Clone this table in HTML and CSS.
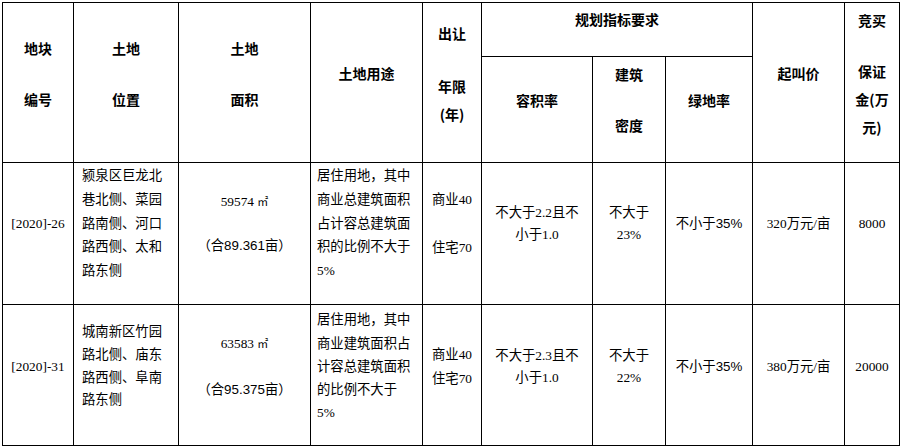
FILE: index.html
```html
<!DOCTYPE html>
<html lang="zh-CN">
<head>
<meta charset="utf-8">
<title>地块出让表</title>
<link rel="stylesheet" href="styles.css">
</head>
<body>
<div class="sheet">
  <div class="cell hd tall"><p>地块</p><p class="pgap">编号</p></div>
  <div class="cell hd tall"><p>土地</p><p class="pgap">位置</p></div>
  <div class="cell hd tall"><p>土地</p><p class="pgap">面积</p></div>
  <div class="cell hd tall"><p>土地用途</p></div>
  <div class="cell hd tall"><p>出让</p><p class="pgap2">年限<br>(年)</p></div>
  <div class="cell hd group"><p>规划指标要求</p></div>
  <div class="cell hd tall"><p>起叫价</p></div>
  <div class="cell hd tall"><p>竞买</p><p class="pgap">保证<br>金(万<br>元)</p></div>
  <div class="cell hd sub"><p>容积率</p></div>
  <div class="cell hd sub"><p>建筑</p><p class="pgap">密度</p></div>
  <div class="cell hd sub"><p>绿地率</p></div>

  <div class="cell bd r1"><p>[2020]-26</p></div>
  <div class="cell bd r1 left loc"><p>颍泉区巨龙北巷北侧、菜园路南侧、河口路西侧、太和路东侧</p></div>
  <div class="cell bd r1 area"><p>59574 <span class="unit">㎡</span></p><p class="agap1">（合<span class="sans">89.361</span>亩）</p></div>
  <div class="cell bd r1 left use"><p>居住用地，其中商业总建筑面积占计容总建筑面积的比例不大于5%</p></div>
  <div class="cell bd r1 term"><p>商业40</p><p class="tgap">住宅70</p></div>
  <div class="cell bd r1 far"><p>不大于2.2且不小于1.0</p></div>
  <div class="cell bd r1 dens"><p>不大于23%</p></div>
  <div class="cell bd r1"><p>不小于<span class="sans">35%</span></p></div>
  <div class="cell bd r1"><p>320万元/亩</p></div>
  <div class="cell bd r1"><p>8000</p></div>

  <div class="cell bd r2"><p>[2020]-31</p></div>
  <div class="cell bd r2 left loc"><p>城南新区竹园路北侧、庙东路西侧、阜南路东侧</p></div>
  <div class="cell bd r2 area"><p>63583 <span class="unit">㎡</span></p><p class="agap2">（合<span class="sans">95.375</span>亩）</p></div>
  <div class="cell bd r2 left use"><p>居住用地，其中商业建筑面积占计容总建筑面积的比例不大于5%</p></div>
  <div class="cell bd r2 term"><p>商业40</p><p>住宅70</p></div>
  <div class="cell bd r2 far"><p>不大于2.3且不小于1.0</p></div>
  <div class="cell bd r2 dens"><p>不大于22%</p></div>
  <div class="cell bd r2"><p>不小于<span class="sans">35%</span></p></div>
  <div class="cell bd r2"><p>380万元/亩</p></div>
  <div class="cell bd r2"><p>20000</p></div>
</div>
</body>
</html>
```

FILE: styles.css
```css
html, body {
  margin: 0;
  padding: 0;
  background: #fff;
}
body {
  padding: 2px;
  font-family: "Liberation Serif", "Noto Sans CJK SC", serif;
  color: #000;
  text-spacing-trim: space-all;
}
.sheet {
  display: grid;
  width: max-content;
  grid-template-columns: 71px 105px 132px 112px 59px 111px 73px 87px 92px 55px;
  grid-template-rows: 54px 106px 142px 141px;
  border-left: 1px solid #000;
  border-top: 1px solid #000;
}
.cell {
  box-sizing: border-box;
  border-right: 1px solid #000;
  border-bottom: 1px solid #000;
  display: flex;
  flex-direction: column;
  justify-content: center;
  align-items: center;
  text-align: center;
  min-width: 0;
}
.cell p {
  margin: 0;
}
.hd {
  font-family: "Noto Sans CJK SC", sans-serif;
  font-weight: 700;
  font-size: 14px;
  line-height: 28px;
}
.tall {
  grid-row: span 2;
  padding-bottom: 19px;
}
.group {
  grid-column: span 3;
  padding-bottom: 22px;
}
.sub {
  padding-bottom: 20px;
}
.pgap {
  margin-top: 23px !important;
}
.pgap2 {
  margin-top: 25px !important;
}
.bd {
  font-size: 13.33px;
  line-height: 23.7px;
}
.r1 {
  padding-bottom: 20px;
}
.r2 {
  padding-bottom: 17px;
}
.left {
  align-items: stretch;
  text-align: left;
}
.loc {
  padding-left: 8px;
  padding-right: 8px;
}
.r2.loc {
  line-height: 22.7px;
}
.use {
  padding-left: 6px;
  padding-right: 11px;
}
.r2.use {
  line-height: 23.2px;
}
.area {
  line-height: 22px;
}
.agap1 {
  margin-top: 22px !important;
}
.agap2 {
  margin-top: 24px !important;
}
.term {
  line-height: 24px;
}
.tgap {
  margin-top: 24px !important;
}
.far {
  padding-left: 8px;
  padding-right: 8px;
  line-height: 22px;
}
.dens {
  padding-left: 8px;
  padding-right: 8px;
  line-height: 22px;
}
.sans {
  font-family: "Liberation Sans", "Noto Sans CJK SC", sans-serif;
}
.unit {
  font-family: "Noto Sans CJK SC", sans-serif;
  font-size: 11px;
}
```
